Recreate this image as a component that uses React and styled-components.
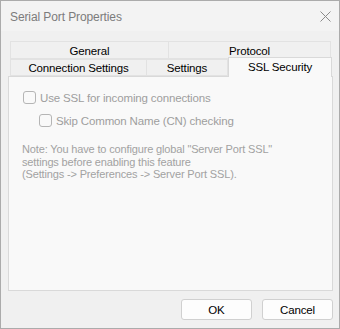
import React from "react";
import styled, { createGlobalStyle } from "styled-components";

const Global = createGlobalStyle`
  html, body { margin: 0; padding: 0; background: #ffffff; }
  * { box-sizing: border-box; }
`;

const Window = styled.div`
  width: 340px;
  height: 329px;
  border: 1px solid #ababab;
  background: #f0f0f0;
  display: flex;
  flex-direction: column;
  font-family: "Liberation Sans", Arial, sans-serif;
  font-size: 11px;
  letter-spacing: -0.15px;
  color: #000;
`;

const TitleBar = styled.div`
  height: 30px;
  flex: none;
  background: #f3f3f3;
  display: flex;
  align-items: center;
  justify-content: space-between;
  padding: 0 7px 0 9px;
`;

const Title = styled.span`
  font-size: 12px;
  letter-spacing: -0.1px;
  color: #7c7c7c;
  padding-top: 1px;
`;

const CloseButton = styled.span`
  width: 14px;
  height: 14px;
  display: flex;
  align-items: center;
  justify-content: center;
`;

const Body = styled.div`
  flex: 1;
  display: flex;
  flex-direction: column;
  padding: 10px 6px 0 7px;
`;

const TabStrip = styled.div`
  display: flex;
  flex-direction: column;
  padding-left: 2px;
  position: relative;
  z-index: 1;
`;

const TabRow = styled.div`
  display: flex;
  height: ${(p) => p.$h}px;
  align-items: flex-end;
`;

const Tab = styled.div`
  width: ${(p) => p.$w}px;
  height: ${(p) => (p.$active ? p.$h + 3 : p.$h)}px;
  margin-bottom: ${(p) => (p.$active ? -1 : 0)}px;
  border: 1px solid ${(p) => (p.$active ? "#d9d9d9" : "#e2e2e2")};
  border-bottom: ${(p) => (p.$active ? "none" : "1px solid #e2e2e2")};
  border-left: ${(p) => (p.$noLeft ? "none" : undefined)};
  background: ${(p) => (p.$active ? "#f9f9f9" : "#f0f0f0")};
  display: flex;
  align-items: ${(p) => (p.$active ? "flex-start" : "center")};
  padding-top: ${(p) => (p.$active ? 3 : 1)}px;
  justify-content: center;
  white-space: nowrap;
  font-size: 11.5px;
  color: #000;
`;

const Panel = styled.div`
  height: 215px;
  width: 325px;
  border: 1px solid #d9d9d9;
  background: #f9f9f9;
  padding: 14px 0 0 13px;
  display: flex;
  flex-direction: column;
`;

const CheckRow = styled.label`
  display: flex;
  align-items: center;
  gap: 4px;
  height: 13px;
  margin-left: ${(p) => p.$indent}px;
  margin-bottom: ${(p) => p.$mb}px;
  color: #9e9e9e;
  font-size: 11.5px;
`;

const Box = styled.span`
  width: 13px;
  height: 13px;
  border: 1px solid #b5b5b5;
  border-radius: 3px;
  background: #f9f9f9;
  flex: none;
`;

const Note = styled.p`
  margin: 0;
  color: #a2a2a2;
  line-height: 12.5px;
  font-size: 11px;
`;

const Footer = styled.div`
  display: flex;
  justify-content: flex-end;
  gap: 10px;
  padding: 8px 0 0 0;
`;

const Button = styled.button`
  width: 71px;
  height: 21px;
  border: 1px solid #d0d0d0;
  border-radius: 3px;
  background: #fdfdfd;
  font-family: "Liberation Sans", Arial, sans-serif;
  font-size: 11.5px;
  letter-spacing: -0.15px;
  color: #000;
  padding: 0;
`;

export default function App() {
  return (
    <>
      <Global />
      <Window>
        <TitleBar>
          <Title>Serial Port Properties</Title>
          <CloseButton>
            <svg width="11" height="11" viewBox="0 0 11 11">
              <path d="M0.5 0.5 L10.5 10.5 M10.5 0.5 L0.5 10.5" stroke="#8a8a8a" strokeWidth="1" fill="none" />
            </svg>
          </CloseButton>
        </TitleBar>
        <Body>
          <TabStrip>
            <TabRow $h={18}>
              <Tab $w={159} $h={18}>General</Tab>
              <Tab $w={162} $h={18} $noLeft>Protocol</Tab>
            </TabRow>
            <TabRow $h={17}>
              <Tab $w={137} $h={17}>Connection Settings</Tab>
              <Tab $w={81} $h={17} $noLeft>Settings</Tab>
              <Tab $w={104} $h={17} $active>SSL Security</Tab>
            </TabRow>
          </TabStrip>
          <Panel>
            <CheckRow $indent={1} $mb={10}>
              <Box />
              Use SSL for incoming connections
            </CheckRow>
            <CheckRow $indent={17} $mb={16}>
              <Box />
              Skip Common Name (CN) checking
            </CheckRow>
            <Note>
              Note: You have to configure global "Server Port SSL"
              <br />
              settings before enabling this feature
              <br />
              (Settings -&gt; Preferences -&gt; Server Port SSL).
            </Note>
          </Panel>
          <Footer>
            <Button>OK</Button>
            <Button>Cancel</Button>
          </Footer>
        </Body>
      </Window>
    </>
  );
}
